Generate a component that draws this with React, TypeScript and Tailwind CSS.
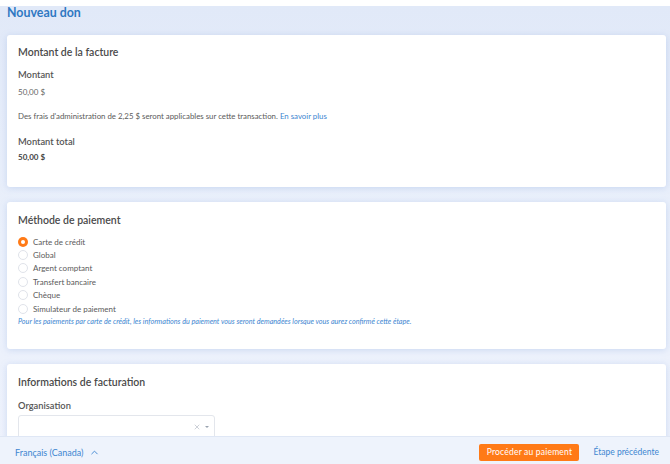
import { ChevronUp, X } from 'lucide-react'

const methods = ['Carte de crédit', 'Global', 'Argent comptant', 'Transfert bancaire', 'Chèque', 'Simulateur de paiement']

function Card({ className = '', children }: { className?: string; children: React.ReactNode }) {
  return (
    <div className={`ml-[7px] mr-[4px] rounded-[3px] bg-white px-[11px] shadow-[0_1px_6px_rgba(140,170,225,0.35)] ${className}`}>
      {children}
    </div>
  )
}

export default function App() {
  const selected = 0

  return (
    <div className="relative h-[464px] w-[670px] overflow-hidden bg-white text-[#555]" style={{ fontFamily: 'Lato, "Open Sans", sans-serif' }}>
      <div className="h-[6px] bg-white" />
      <div className="h-[458px] bg-gradient-to-b from-[#e1e9f8] via-[#eaf0fb] to-[#eef2fc]">
        <h1 className="pl-[7px] text-[12.4px] font-bold leading-[13px] text-[#2f78c2]">Nouveau don</h1>

        <Card className="mt-[16px] pt-[10px] pb-[25px]">
          <h2 className="text-[10.5px] font-semibold leading-[14px] text-[#4a4a4a]">Montant de la facture</h2>
          <div className="mt-[10px] text-[9.3px] font-semibold leading-[12px] text-[#555]">Montant</div>
          <div className="mt-[6px] text-[8px] leading-[10px] text-[#666]">50,00 $</div>
          <p className="mt-[14px] text-[7.85px] leading-[10px] text-[#5a5a5a]">
            Des frais d'administration de 2,25 $ seront applicables sur cette transaction.{' '}
            <a className="text-[#3d86d1]">En savoir plus</a>
          </p>
          <div className="mt-[15px] text-[9.3px] font-semibold leading-[12px] text-[#555]">Montant total</div>
          <div className="mt-[4px] text-[8px] font-bold leading-[10px] text-[#444]">50,00 $</div>
        </Card>

        <Card className="mt-[15px] pt-[11px] pb-[23px]">
          <h2 className="text-[10.5px] font-semibold leading-[14px] text-[#4a4a4a]">Méthode de paiement</h2>
          <div className="mt-[8px] flex flex-col">
            {methods.map((m, i) => (
              <label key={m} className="flex h-[13.4px] items-center gap-[5px] text-[8px] text-[#5a5a5a]">
                {i === selected ? (
                  <span className="flex h-[10px] w-[10px] items-center justify-center rounded-full bg-[#ff7a17]">
                    <span className="h-[4px] w-[4px] rounded-full bg-white" />
                  </span>
                ) : (
                  <span className="h-[10px] w-[10px] rounded-full border border-[#e0e3ea] bg-white" />
                )}
                {m}
              </label>
            ))}
          </div>
          <p className="mt-[2px] text-[7.2px] italic leading-[9px] text-[#3d86d1]">
            Pour les paiements par carte de crédit, les informations du paiement vous seront demandées lorsque vous aurez confirmé cette étape.
          </p>
        </Card>

        <Card className="mt-[15px] pt-[11px] pb-[20px]">
          <h2 className="text-[10.5px] font-semibold leading-[14px] text-[#4a4a4a]">Informations de facturation</h2>
          <div className="mt-[11px] text-[9.3px] font-semibold leading-[12px] text-[#555]">Organisation</div>
          <div className="mt-[3px] flex h-[24px] w-[197px] items-center justify-end gap-[4px] rounded-[3px] border border-[#e3e6ec] pr-[5px]">
            <X size={8} strokeWidth={1.5} className="text-[#9aa3b0]" />
            <span className="h-0 w-0 border-x-[2px] border-t-[2.5px] border-x-transparent border-t-[#9aa3b0]" />
          </div>
        </Card>
      </div>

      <div className="absolute inset-x-0 bottom-0 flex h-[28px] items-center border-t border-[#dfe7f5] bg-[#eef3fc] pt-[4px] pl-[15px] pr-[11px]">
        <span className="text-[9px] text-[#3d86d1]">Français (Canada)</span>
        <ChevronUp size={11} strokeWidth={2} className="ml-[5px] text-[#3d86d1]" />
        <div className="flex-1" />
        <button className="h-[17px] w-[100px] rounded-[2px] bg-[#ff7a17] text-[8.5px] tracking-[0.2px] text-white">Procéder au paiement</button>
        <button className="ml-[14px] text-[8.5px] text-[#3d86d1]">Étape précédente</button>
      </div>
    </div>
  )
}
